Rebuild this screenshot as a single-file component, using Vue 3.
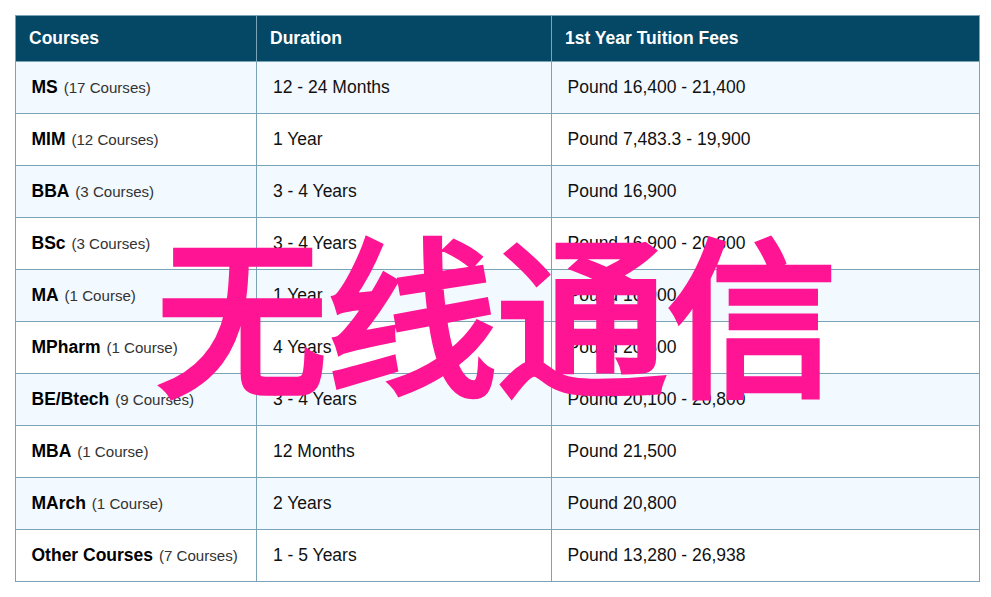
<script setup>
const rows = [
  ['MS', '(17 Courses)', '12 - 24 Months', 'Pound 16,400 - 21,400'],
  ['MIM', '(12 Courses)', '1 Year', 'Pound 7,483.3 - 19,900'],
  ['BBA', '(3 Courses)', '3 - 4 Years', 'Pound 16,900'],
  ['BSc', '(3 Courses)', '3 - 4 Years', 'Pound 16,900 - 20,800'],
  ['MA', '(1 Course)', '1 Year', 'Pound 16,900'],
  ['MPharm', '(1 Course)', '4 Years', 'Pound 20,800'],
  ['BE/Btech', '(9 Courses)', '3 - 4 Years', 'Pound 20,100 - 20,800'],
  ['MBA', '(1 Course)', '12 Months', 'Pound 21,500'],
  ['MArch', '(1 Course)', '2 Years', 'Pound 20,800'],
  ['Other Courses', '(7 Courses)', '1 - 5 Years', 'Pound 13,280 - 26,938'],
]
</script>

<template>
  <div class="page">
    <table class="fees">
      <colgroup>
        <col class="c1" />
        <col class="c2" />
        <col class="c3" />
      </colgroup>
      <thead>
        <tr>
          <th>Courses</th>
          <th>Duration</th>
          <th>1st Year Tuition Fees</th>
        </tr>
      </thead>
      <tbody>
        <tr v-for="r in rows" :key="r[0]">
          <td><strong>{{ r[0] }}</strong> <span class="count">{{ r[1] }}</span></td>
          <td>{{ r[2] }}</td>
          <td>{{ r[3] }}</td>
        </tr>
      </tbody>
    </table>
    <div class="mark">无线通信</div>
  </div>
</template>

<style>
html, body { margin: 0; background: #fff; }
</style>

<style scoped>
.page {
  position: relative;
  width: 991px;
  height: 597px;
  padding: 15px 12px 0 15px;
  box-sizing: border-box;
  overflow: hidden;
  font-family: "Liberation Sans", Arial, sans-serif;
  color: #111;
}
.fees {
  width: 964px;
  table-layout: fixed;
  border-collapse: collapse;
  font-size: 17.5px;
}
.c1 { width: 241px; }
.c2 { width: 295px; }
.c3 { width: 428px; }
th {
  height: 46px;
  padding: 0 13px;
  background: #044866;
  color: #fff;
  font-size: 17.5px;
  font-weight: 700;
  text-align: left;
  border: 1px solid #7ba3b8;
}
td {
  height: 52px;
  padding: 0 16px 0 15.5px;
  border: 1px solid #7ba3b8;
  white-space: nowrap;
}
td:nth-child(2) { padding-left: 16px; }
tbody tr:nth-child(odd) td { background: #f2f9ff; }
th, td { box-sizing: border-box; }
strong { color: #000; }
.count {
  margin-left: 1px;
  font-size: 15.1px;
  color: #333;
}
.mark {
  position: absolute;
  left: 157px;
  top: 207px;
  font-family: "Noto Sans CJK SC", sans-serif;
  font-size: 170px;
  font-weight: 400;
  -webkit-text-stroke: 6.5px #ff1493;
  line-height: 1.2;
  color: #ff1493;
  white-space: nowrap;
}
</style>
